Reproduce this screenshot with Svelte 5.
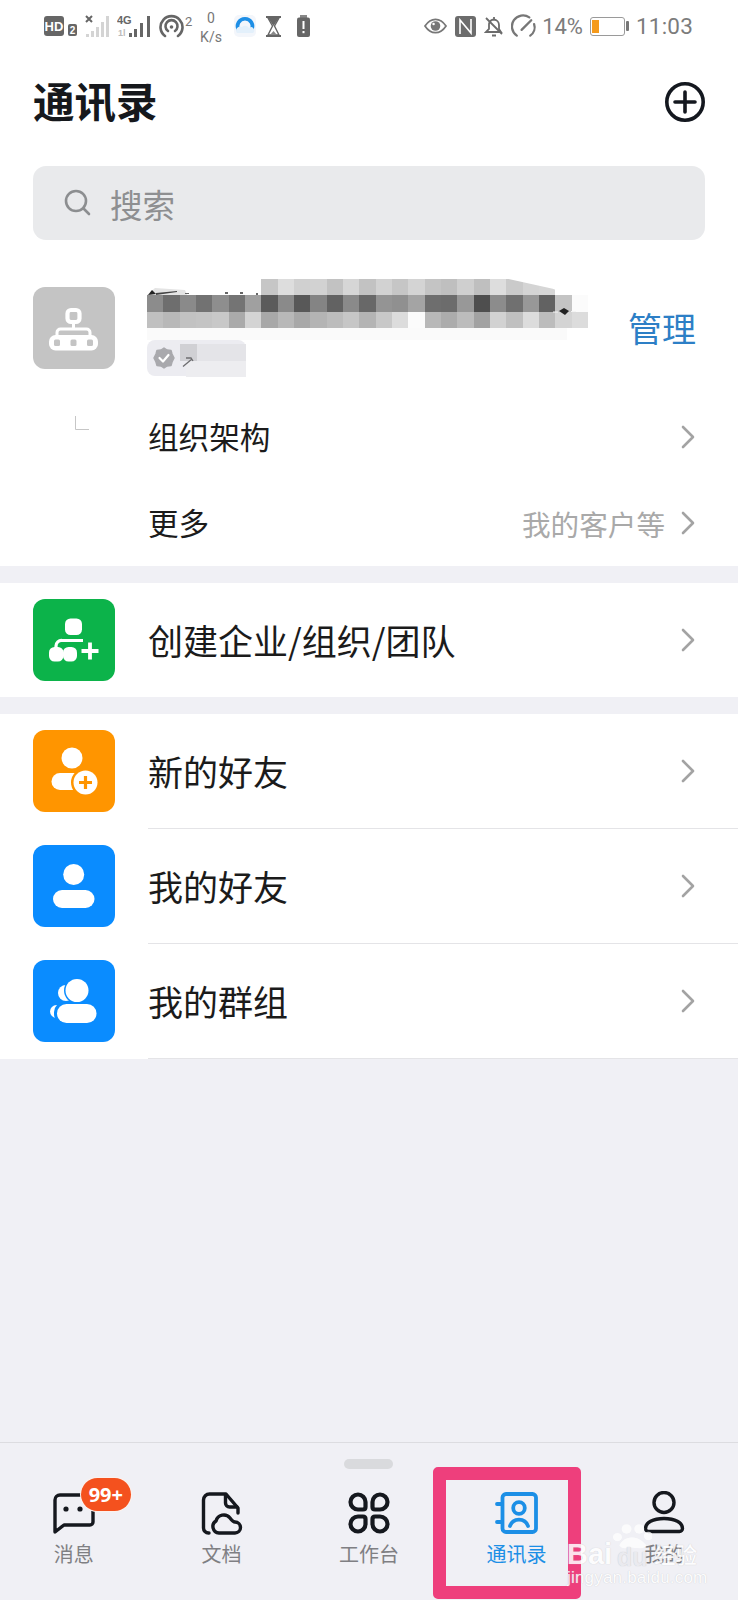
<script lang="ts">
  // mosaic redaction over the org name, grey values sampled by eye, null = blank cell
  const MOSAIC: (string | null)[][] = [
    [null, null, null, null, null, null, null, 'c6', 'dd', 'd0', 'd2', 'c2', 'd6', 'c2', 'd2', 'c6', 'd4', 'c4', 'bf', 'cf', 'bf', 'dd', 'ca', 'd4', 'd6', null, null],
    ['8c', '6e', '8a', '72', '8e', '74', 'a0', '5b', '8a', '58', '84', '62', '8a', '68', '94', '90', 'a4', '6e', '6c', '98', '4e', '8c', '70', '98', '62', 'c4', 'fb'],
    ['c0', 'b8', 'c2', 'c4', 'c8', 'aa', 'd4', 'a8', 'b8', 'a8', 'b4', 'bc', 'c6', 'b4', 'c8', 'dc', 'fb', 'b8', 'ac', 'bc', 'a2', 'd2', 'c0', 'dc', 'bc', 'd4', 'dc'],
  ];

  const orgRows = [
    { label: '组织架构', hint: '' },
    { label: '更多', hint: '我的客户等' },
  ];

  const tabs = [
    { key: 'msg', label: '消息' },
    { key: 'doc', label: '文档' },
    { key: 'work', label: '工作台' },
    { key: 'contacts', label: '通讯录' },
    { key: 'me', label: '我的' },
  ];
</script>

{#snippet chevron()}
  <svg class="chevron" width="14" height="24" viewBox="0 0 14 24" fill="none" stroke="#a3a3a3" stroke-width="2.6" stroke-linecap="round" stroke-linejoin="round"><path d="M2 2 L12 12 L2 22" /></svg>
{/snippet}

<div class="page">
  <div class="status">
    <svg width="34" height="22" viewBox="0 0 34 22">
      <rect x="0" y="1" width="20" height="20" rx="3" fill="#666" />
      <text x="10" y="16" class="tiny" font-size="13" fill="#fff" text-anchor="middle">HD</text>
      <rect x="24" y="9" width="9" height="12" rx="2" fill="#666" />
      <text x="28.5" y="19" class="tiny" font-size="10" fill="#fff" text-anchor="middle">2</text>
    </svg>
    <svg class="sig1" width="24" height="24" viewBox="0 0 24 24">
      <path d="M1 2 L7 8 M7 2 L1 8" stroke="#666" stroke-width="2" />
      <g fill="#d4d4d4"><rect x="1" y="20" width="3" height="3" /><rect x="6" y="17" width="3" height="6" /><rect x="11" y="13" width="3" height="10" /><rect x="16" y="8" width="3" height="15" /><rect x="21" y="2" width="3" height="21" /></g>
    </svg>
    <svg class="sig2" width="35" height="24" viewBox="0 0 35 24">
      <text x="0" y="10" class="tiny" font-size="11" fill="#666">4G</text>
      <text x="1" y="22" class="tiny" font-size="9" fill="#bbb">1l</text>
      <g fill="#666"><rect x="12" y="19" width="3" height="4" /><rect x="17" y="15" width="3" height="8" /><rect x="23" y="9" width="3" height="14" /><rect x="30" y="2" width="3" height="21" /></g>
    </svg>
    <svg class="hot" width="34" height="24" viewBox="0 0 34 24" fill="none" stroke="#666" stroke-width="2.6" stroke-linecap="round">
      <path d="M6 22 A11 11 0 1 1 19 22" />
      <path d="M9 17 A6 6 0 1 1 16 17" />
      <circle cx="12.5" cy="13" r="1.8" fill="#666" stroke="none" />
      <text x="26" y="12" font-size="13" class="plain" fill="#777" stroke="none">2</text>
    </svg>
    <div class="speed"><span>0</span><span>K/s</span></div>
    <svg class="app" width="22" height="22" viewBox="0 0 22 22" fill="none">
      <rect width="22" height="22" rx="5" fill="#f3f6fb" />
      <path d="M4.500 15 A7.500 7.500 0 1 1 17.500 15" stroke="#1e8fe6" stroke-width="3.600" />
      <path d="M3 18 A4 4 0 0 1 8 12 A4.500 4.500 0 0 1 15 13 A3 3 0 0 1 19 18 Z" fill="#e3f0fb" />
    </svg>
    <svg class="glass" width="17" height="21" viewBox="0 0 17 21">
      <path d="M1 1 H16 M1 20 H16" stroke="#666" stroke-width="2" />
      <path d="M3 2 H14 L9.5 10 L14 19 H3 L7.5 10 Z" fill="none" stroke="#666" stroke-width="1.4" />
      <path d="M3 2 H14 L8.5 10 Z" fill="#666" />
      <path d="M5 19 L8.5 15 L12 19 Z" fill="#888" />
    </svg>
    <svg class="batt-alert" width="13" height="22" viewBox="0 0 13 22">
      <rect x="3" y="0" width="7" height="3" fill="#888" />
      <rect x="0" y="2.5" width="13" height="19.5" rx="2" fill="#666" />
      <rect x="5.5" y="6" width="2" height="8" fill="#fff" />
      <rect x="5.5" y="16" width="2" height="2.2" fill="#fff" />
    </svg>

    <div class="status-gap"></div>

    <svg width="23" height="16" viewBox="0 0 24 16" fill="none">
      <path d="M1 8 C5 2 9 1 12 1 S19 2 23 8 C19 14 15 15 12 15 S5 14 1 8 Z" stroke="#777" stroke-width="1.8" />
      <circle cx="12" cy="8" r="5" fill="#777" />
      <circle cx="10" cy="6" r="1.3" fill="#fff" />
    </svg>
    <svg class="nfc" width="21" height="21" viewBox="0 0 21 21">
      <rect width="21" height="21" rx="3" fill="#6c6c6c" />
      <path d="M5 18 V4 L16 17 V3" fill="none" stroke="#fff" stroke-width="1.600" />
    </svg>
    <svg class="bell" width="20" height="21" viewBox="0 0 20 21" fill="none" stroke="#6c6c6c" stroke-width="1.8">
      <path d="M2 16 H17 L15 13 V9 A5.5 5.5 0 0 0 10 3.500 A5.500 5.500 0 0 0 5 8 V13 Z" />
      <path d="M8 19.500 H12 M10 1 V3 M2 2 L18 18" />
    </svg>
    <svg class="gauge" width="26" height="24" viewBox="0 0 27 24" fill="none" stroke="#777" stroke-width="2.4" stroke-linecap="round">
      <path d="M6 22 A10.500 10.500 0 0 1 19 3" />
      <path d="M24 10 A10.500 10.500 0 0 1 20 22" />
      <path d="M11 16 L21 6" />
    </svg>
    <span class="pct">14%</span>
    <div class="batt"><div class="batt-fill"></div></div>
    <div class="batt-nub"></div>
    <span class="clock">11:03</span>
  </div>

  <div class="top">
    <header class="head">
      <h1>通讯录</h1>
      <svg width="42" height="42" viewBox="0 0 42 42" fill="none" stroke="#14181f" stroke-width="3.6" stroke-linecap="round">
        <circle cx="21" cy="21" r="18.200" />
        <path d="M21 11 V31 M11 21 H31" />
      </svg>
    </header>

    <div class="search">
      <svg width="30" height="30" viewBox="0 0 30 30" fill="none" stroke="#8c8e90" stroke-width="2.6" stroke-linecap="round">
        <circle cx="13" cy="13" r="10" />
        <path d="M20.500 20.500 L26 26" />
      </svg>
      <span>搜索</span>
    </div>
  </div>

  <section class="card org-card">
    <div class="org">
      <div class="tile grey">
        <svg width="82" height="82" viewBox="0 0 82 82" fill="none">
          <rect x="34.500" y="23" width="12" height="12" rx="3.500" stroke="#fff" stroke-width="4.200" />
          <path d="M40.500 36 V42 M24 49 V45.500 A3.500 3.500 0 0 1 27.500 42 H53.500 A3.500 3.500 0 0 1 57 45.500 V49" stroke="#fff" stroke-width="3" />
          <rect x="16" y="48" width="49" height="15.500" rx="6.500" fill="#fff" />
          <g fill="#c4c4c4">
            <rect x="21" y="52.500" width="6" height="6.500" rx="1.500" />
            <rect x="37.500" y="52.500" width="6" height="6.500" rx="1.500" />
            <rect x="54" y="52.500" width="6" height="6.500" rx="1.500" />
          </g>
        </svg>
      </div>
      <div class="org-name">
        <div class="mosaic">
          {#each MOSAIC as row, r}
            <div class="mosaic-row" class:top-row={r === 0}>
              {#each row as cell}
                <span style={cell ? `background:#${cell}${cell}${cell}` : ''}></span>
              {/each}
            </div>
          {/each}
          <div class="mosaic-fade"></div>
          <svg class="specks" width="441" height="46" viewBox="0 0 441 46">
            <path d="M0 16 L8 9 L38 11 L40 16 Z" fill="#e4e4e4" />
            <path d="M1 16 L5 11 L9 15 Z" fill="#222" />
            <path d="M9 14 L30 12 V13 L9 16 Z" fill="#444" />
            <path d="M38 14 h4 v1 h-4 Z M78 13 h3 v2 h-3 Z M93 13 h3 v2 h-3 Z M109 14 h2 v2 h-2 Z" fill="#666" />
            <path d="M412 32 L417 29 L422 32 L418 36 Z" fill="#222" />
            <path d="M406 32.500 h5 v1 h-5 Z M424 32 h5 v1 h-5 Z" fill="#f4f4f4" />
          </svg>
        </div>
        <div class="badge">
          <svg width="22" height="22" viewBox="0 0 22 22">
            <path d="M11 1 L14 3 L18 3.500 L19 7 L21 11 L19 15 L18 18.500 L14 19 L11 21 L8 19 L4 18.500 L3 15 L1 11 L3 7 L4 3.500 L8 3 Z" fill="#a9a9ad" stroke="#a9a9ad" stroke-linejoin="round" stroke-width="1.500" />
            <path d="M6.500 11 L10 14.500 L15.500 8" fill="none" stroke="#fff" stroke-width="2.200" stroke-linecap="round" stroke-linejoin="round" />
          </svg>
          <div class="patch-a"></div>
          <div class="patch-b"></div>
          <svg class="pick" width="12" height="10" viewBox="0 0 12 10" fill="none" stroke="#6d6d70" stroke-width="1.300"><path d="M1 9.500 L10 2 M4 1 H9 L11 4" /></svg>
        </div>
      </div>
      <span class="manage">管理</span>
    </div>
    <svg class="corner" width="14" height="14" viewBox="0 0 14 14" fill="none" stroke="#c6c6c6" stroke-width="1"><path d="M0.500 0 V13.500 H14" /></svg>
    {#each orgRows as row}
      <div class="org-row">
        <span class="label sm">{row.label}</span>
        {#if row.hint}<span class="hint">{row.hint}</span>{/if}
        {@render chevron()}
      </div>
    {/each}
  </section>

  <section class="card gap">
    <div class="row solo">
      <div class="tile green">
        <svg width="82" height="82" viewBox="0 0 82 82" fill="none">
          <rect x="32" y="19.500" width="17" height="16.500" rx="5.500" fill="#fff" />
          <path d="M23 49 V47 A5.500 5.500 0 0 1 29 41.500 H50" stroke="#fff" stroke-width="3.200" />
          <rect x="16" y="48" width="14.500" height="14.500" rx="5.500" fill="#fff" />
          <rect x="30" y="48" width="14" height="14.500" rx="5.500" fill="#fff" />
          <path d="M57 43.500 V60.500 M48.500 52 H65.500" stroke="#fff" stroke-width="3.800" />
        </svg>
      </div>
      <div class="row-main">
        <span class="label">创建企业/组织/团队</span>
        {@render chevron()}
      </div>
    </div>
  </section>

  <section class="card gap">
    <div class="row">
      <div class="tile orange">
        <svg width="82" height="82" viewBox="0 0 82 82">
          <circle cx="39" cy="28" r="10.500" fill="#fff" />
          <path d="M27 43 H52 V60 H27 A8.500 8.500 0 0 1 27 43 Z" fill="#fff" />
          <circle cx="52.500" cy="52.500" r="14.500" fill="#ff9500" />
          <circle cx="52.500" cy="52.500" r="12" fill="#fff" />
          <path d="M52.500 46 V59 M46 52.500 H59" stroke="#ff9500" stroke-width="3.200" />
        </svg>
      </div>
      <div class="row-main"><span class="label">新的好友</span>{@render chevron()}</div>
    </div>
    <div class="row">
      <div class="tile blue">
        <svg width="82" height="82" viewBox="0 0 82 82">
          <circle cx="40.700" cy="29.500" r="10.500" fill="#fff" />
          <rect x="20" y="45" width="41.500" height="18" rx="9" fill="#fff" />
        </svg>
      </div>
      <div class="row-main"><span class="label">我的好友</span>{@render chevron()}</div>
    </div>
    <div class="row">
      <div class="tile blue">
        <svg width="82" height="82" viewBox="0 0 82 82">
          <circle cx="33" cy="33" r="8" fill="#fff" />
          <circle cx="44" cy="30.500" r="13" fill="#0a8cff" />
          <circle cx="44" cy="30.500" r="11.500" fill="#fff" />
          <rect x="17" y="45" width="20" height="13" rx="6.500" fill="#fff" />
          <rect x="21" y="42" width="44" height="22" rx="10" fill="#0a8cff" />
          <rect x="24" y="44" width="39.500" height="19" rx="9.500" fill="#fff" />
        </svg>
      </div>
      <div class="row-main"><span class="label">我的群组</span>{@render chevron()}</div>
    </div>
  </section>

  <nav class="tabs">
    <div class="handle"></div>
    {#each tabs as tab}
      <div class="tab" class:active={tab.key === 'contacts'}>
        <div class="tab-icon">
          {#if tab.key === 'msg'}
            <svg width="44" height="44" viewBox="0 0 44 44" fill="none" stroke="#15181e" stroke-width="3.400" stroke-linecap="round" stroke-linejoin="round">
              <path d="M30 4 H8 A5 5 0 0 0 3 9 V41 L12 34 H38 A3 3 0 0 0 41 31 V20" />
              <circle cx="14" cy="18" r="2.600" fill="#15181e" stroke="none" />
              <circle cx="28" cy="18" r="2.600" fill="#15181e" stroke="none" />
            </svg>
            <span class="dot-badge">99+</span>
          {:else if tab.key === 'doc'}
            <svg width="44" height="44" viewBox="0 0 44 44" fill="none" stroke="#15181e" stroke-width="3.400" stroke-linecap="round" stroke-linejoin="round">
              <path d="M10 42 H9.500 A5 5 0 0 1 4.500 37 V9 A6 6 0 0 1 10.500 3 H27 L39 17 V22" />
              <path d="M26.500 4 V12 A4 4 0 0 0 30.500 16 H38" />
              <path d="M20 42 A6.500 6.500 0 0 1 17 30 A8 8 0 0 1 31 27 Q34 31 36 31 A5.500 5.500 0 0 1 36 42 Z" />
            </svg>
          {:else if tab.key === 'work'}
            <svg width="44" height="44" viewBox="0 0 44 44" fill="none" stroke="#15181e" stroke-width="4.200" stroke-linejoin="round">
              <path d="M11 3.500 A7.500 7.500 0 0 1 18.500 11 V16 Q18.500 18.500 16 18.500 H11 A7.500 7.500 0 0 1 11 3.500 Z" />
              <path d="M33 3.500 A7.500 7.500 0 0 1 33 18.500 H28 Q25.500 18.500 25.500 16 V11 A7.500 7.500 0 0 1 33 3.500 Z" />
              <path d="M11 25.500 H16 Q18.500 25.500 18.500 28 V33 A7.500 7.500 0 1 1 11 25.500 Z" />
              <path d="M28 25.500 H33 A7.500 7.500 0 1 1 25.500 33 V28 Q25.500 25.500 28 25.500 Z" />
            </svg>
          {:else if tab.key === 'contacts'}
            <svg width="44" height="44" viewBox="0 0 44 44" fill="none" stroke="#1c8fe6" stroke-width="3.800" stroke-linecap="round" stroke-linejoin="round">
              <rect x="7.500" y="3" width="33.500" height="38" rx="3.500" />
              <path d="M2 13 H7 M2 31 H7" />
              <circle cx="24" cy="17" r="5.800" />
              <path d="M15 35 A9.500 9.500 0 0 1 33 35" />
            </svg>
          {:else}
            <svg width="44" height="44" viewBox="0 0 44 44" fill="none" stroke="#15181e" stroke-width="3.400" stroke-linejoin="round">
              <circle cx="22" cy="11.500" r="10" />
              <path d="M3.500 37.500 C3.500 31.500 11 27.500 22 27.500 S40.500 31.500 40.500 37.500 A3 3 0 0 1 37.500 40.500 H6.500 A3 3 0 0 1 3.500 37.500 Z" />
            </svg>
          {/if}
        </div>
        <span class="tab-label">{tab.label}</span>
      </div>
    {/each}

    <div class="focus-box"></div>
    <div class="watermark">
      <div class="wm-top">
        <span class="wm-bai">Bai</span>
        <svg class="wm-paw" width="40" height="26" viewBox="0 0 44 44" preserveAspectRatio="none" fill="#fff">
          <ellipse cx="6" cy="24" rx="5" ry="7" />
          <ellipse cx="16" cy="10" rx="5.500" ry="8" />
          <ellipse cx="30" cy="10" rx="5.500" ry="8" />
          <ellipse cx="40" cy="22" rx="5" ry="7" />
          <path d="M8 38 C10 30 16 24 22 24 S34 30 38 38 C36 44 28 43 22 42 C16 43 10 44 8 38 Z" />
        </svg>
        <span class="wm-du">du</span>
        <span class="wm-cn">经验</span>
      </div>
      <div class="wm-url">jingyan.baidu.com</div>
    </div>
  </nav>
</div>

<style>
  :global(body) {
    margin: 0;
    background: #f0f0f5;
  }
  .page {
    position: relative;
    width: 738px;
    height: 1600px;
    display: flex;
    flex-direction: column;
    background: #f0f0f5;
    font-family: "Noto Sans CJK SC", "Noto Sans", sans-serif;
    overflow: hidden;
  }
  .tiny {
    font-family: "Liberation Sans", sans-serif;
    font-weight: 700;
  }
  .plain {
    font-family: Roboto, sans-serif;
  }

  .status {
    height: 52px;
    box-sizing: border-box;
    padding: 0 45px 0 44px;
    display: flex;
    align-items: center;
    background: #fff;
    color: #7c7c7c;
  }
  .sig1 { margin-left: 7px; }
  .sig2 { margin-left: 8px; }
  .hot { margin-left: 7px; }
  .speed {
    width: 36px;
    padding-top: 3px;
    display: flex;
    flex-direction: column;
    align-items: center;
    font: 14px/19px Roboto, sans-serif;
    color: #777;
  }
  .app { margin-left: 5px; }
  .glass { margin-left: 9px; }
  .batt-alert { margin-left: 15px; }
  .status-gap { flex: 1; }
  .nfc { margin-left: 8px; }
  .bell { margin-left: 8px; }
  .gauge { margin-left: 7px; }
  .pct {
    margin-left: 5px;
    font: 22px Roboto, sans-serif;
  }
  .batt {
    width: 35px;
    height: 19px;
    margin-left: 7px;
    box-sizing: border-box;
    border: 1px solid #9a9a9a;
    border-radius: 3px;
    padding: 2px 1px;
  }
  .batt-fill {
    width: 7px;
    height: 100%;
    background: #f59a1b;
  }
  .batt-nub {
    width: 3px;
    height: 10px;
    margin-left: 1px;
    background: #777;
    border-radius: 1px;
  }
  .clock {
    margin-left: 7px;
    font: 22.5px Roboto, sans-serif;
    letter-spacing: 0.2px;
  }

  .top {
    height: 188px;
    background: #fff;
  }
  .head {
    height: 100px;
    box-sizing: border-box;
    padding: 0 32px 0 33px;
    display: flex;
    align-items: center;
    justify-content: space-between;
  }
  .head h1 {
    margin: 0 0 2px;
    font-size: 41.5px;
    line-height: 1;
    font-weight: 700;
    color: #16181c;
  }

  .search {
    height: 74px;
    margin: 14px 33px 0;
    display: flex;
    align-items: center;
    gap: 17px;
    padding-left: 30px;
    background: #e9eaec;
    border-radius: 13px;
    color: #8e8f91;
    font-size: 32.5px;
  }

  .card {
    background: #fff;
  }
  .org-card {
    position: relative;
  }
  .gap {
    margin-top: 17px;
  }

  .tile {
    width: 82px;
    height: 82px;
    flex: none;
    border-radius: 12px;
  }
  .tile svg { display: block; }
  .grey { background: #c4c4c4; }
  .green { background: #0cb34a; }
  .orange { background: #ff9500; }
  .blue { background: #0a8cff; }

  .org {
    height: 154px;
    box-sizing: border-box;
    padding: 39px 42px 0 33px;
    display: flex;
    gap: 32px;
  }
  .org .tile { margin-top: 8px; }
  .org-name {
    width: 441px;
    flex: none;
  }
  .mosaic {
    position: relative;
  }
  .mosaic-row {
    display: flex;
    height: 16.33px;
  }
  .mosaic-row span {
    width: 16.33px;
    flex: none;
  }
  .mosaic-row.top-row {
    clip-path: polygon(25.8% 0, 82% 0, 92% 60%, 96% 100%, 25.8% 100%);
  }
  .mosaic-fade {
    height: 12px;
    width: 420px;
    background: #fafafa;
  }
  .specks {
    position: absolute;
    left: 0;
    top: 0;
  }
  .badge {
    position: relative;
    width: 99px;
    height: 36px;
    border-radius: 8px;
    background: #ececf1;
    display: flex;
    align-items: center;
    padding-left: 6px;
    box-sizing: border-box;
  }
  .pick {
    position: absolute;
    left: 35px;
    top: 17px;
  }
  .patch-a {
    position: absolute;
    left: 33px;
    top: 4px;
    width: 66px;
    height: 17px;
    background: linear-gradient(90deg, #d0d0d4 0 17px, #e4e4e8 17px);
  }
  .patch-b {
    position: absolute;
    left: 39px;
    top: 21px;
    width: 60px;
    height: 16px;
    background: #ededf0;
  }
  .manage {
    margin: 24px 0 0 auto;
    font-size: 34px;
    line-height: 50px;
    color: #2d7fc6;
  }
  .corner {
    position: absolute;
    left: 75px;
    top: 176px;
  }
  .org-row {
    height: 86px;
    box-sizing: border-box;
    padding: 0 43px 0 148px;
    display: flex;
    align-items: center;
  }

  .row {
    display: flex;
    align-items: center;
    height: 115px;
    padding-left: 33px;
  }
  .row.solo {
    height: 114px;
  }
  .row .tile {
    margin-bottom: 2px;
  }
  .row.solo .tile {
    margin-bottom: 0;
  }
  .row-main {
    flex: 1;
    height: 100%;
    margin-left: 33px;
    padding-right: 43px;
    display: flex;
    align-items: center;
    box-sizing: border-box;
    border-bottom: 1px solid #e4e4e7;
  }
  .row.solo .row-main { border-bottom: 0; }
  .label {
    font-size: 35px;
    color: #1b1b1b;
    padding-bottom: 1px;
  }
  .label.sm {
    font-size: 30.6px;
    padding-bottom: 2px;
  }
  .hint {
    margin-left: auto;
    font-size: 28.6px;
    color: #a9a9a9;
  }
  .chevron {
    margin-left: auto;
    flex: none;
  }
  .hint + .chevron {
    margin-left: 16px;
  }

  .tabs {
    position: absolute;
    left: 0;
    right: 0;
    top: 1442px;
    height: 158px;
    box-sizing: border-box;
    border-top: 1px solid #dcdce0;
    display: grid;
    grid-template-columns: repeat(5, 1fr);
    padding-top: 48px;
  }
  .handle {
    position: absolute;
    left: 344px;
    top: 16px;
    width: 49px;
    height: 10px;
    border-radius: 5px;
    background: #d9dadd;
  }
  .tab {
    display: flex;
    flex-direction: column;
    align-items: center;
    color: #7f7f83;
    font-size: 20px;
  }
  .tab.active {
    color: #1c8fe6;
  }
  .tab-icon {
    position: relative;
    width: 44px;
    height: 44px;
  }
  .tab-icon svg { display: block; }
  .dot-badge {
    position: absolute;
    left: 29px;
    top: -13px;
    width: 50px;
    height: 33px;
    box-sizing: border-box;
    border-radius: 17px;
    background: #f4511e;
    color: #fff;
    font: 700 20px/33px "Noto Sans", sans-serif;
    text-align: center;
    box-shadow: 0 0 0 1px #fdf1ec;
  }
  .tab-label {
    margin-top: 4px;
    line-height: 30px;
  }

  .focus-box {
    position: absolute;
    left: 433px;
    top: 24px;
    width: 148px;
    height: 132px;
    box-sizing: border-box;
    border: 13px solid #ee3f7c;
    border-radius: 5px;
  }
  .watermark {
    position: absolute;
    left: 567px;
    top: 70px;
    width: 140px;
    color: #fff;
    opacity: 0.85;
    text-shadow: 0 0 1px #bdbdc2;
  }
  .wm-top {
    position: relative;
    height: 54px;
    font-family: "Liberation Sans", sans-serif;
  }
  .wm-bai {
    position: absolute;
    left: 0;
    top: 26px;
    font-size: 29px;
    font-weight: 700;
    line-height: 30px;
  }
  .wm-paw {
    position: absolute;
    left: 45px;
    top: 10px;
    opacity: 0.9;
  }
  .wm-du {
    position: absolute;
    left: 50px;
    top: 31px;
    font-size: 25px;
    font-weight: 700;
    line-height: 26px;
    color: #e9e9ee;
  }
  .wm-cn {
    position: absolute;
    left: 87px;
    top: 28px;
    font: 500 21.5px/26px "Noto Sans CJK SC", sans-serif;
  }
  .wm-url {
    font: 17px/22px "Liberation Sans", sans-serif;
    letter-spacing: 0.2px;
    white-space: nowrap;
  }
</style>
